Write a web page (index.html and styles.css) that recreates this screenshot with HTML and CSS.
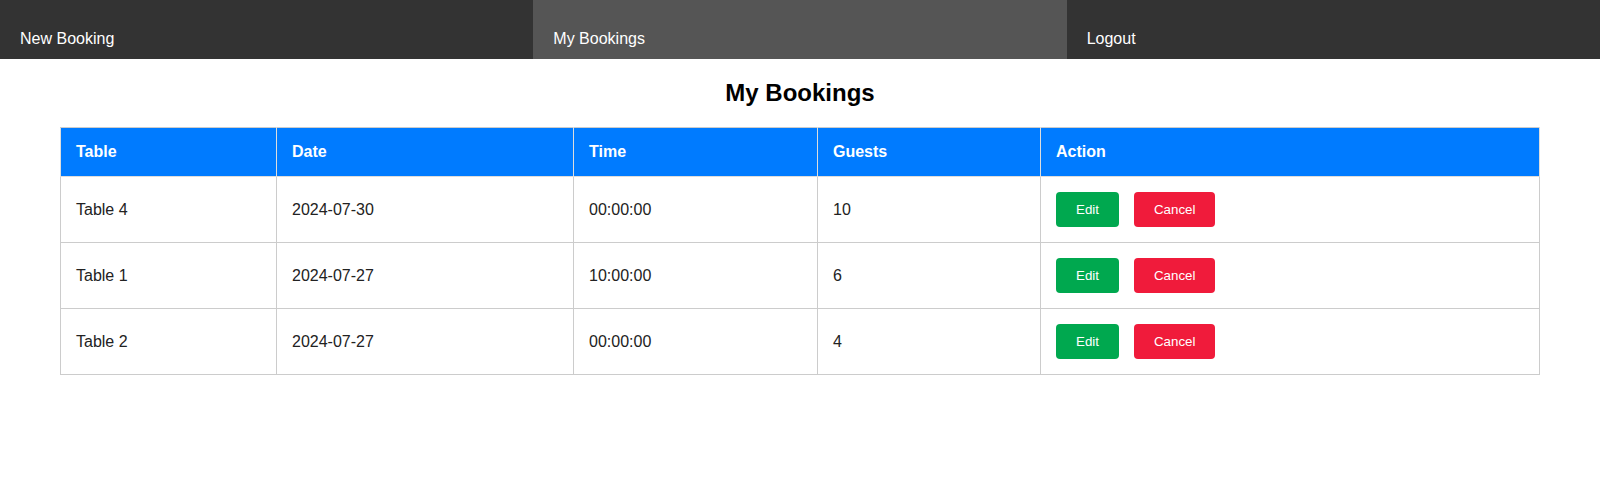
FILE: index.html
```html
<!DOCTYPE html>
<html lang="en">
<head>
<meta charset="utf-8">
<title>My Bookings</title>
<link rel="stylesheet" href="styles.css">
</head>
<body>
<nav class="nav">
  <a class="nav-item" href="#">New Booking</a>
  <a class="nav-item active" href="#">My Bookings</a>
  <a class="nav-item" href="#">Logout</a>
</nav>
<main class="content">
  <h2 class="title">My Bookings</h2>
  <table class="bookings">
    <thead>
      <tr>
        <th class="c-table">Table</th>
        <th class="c-date">Date</th>
        <th class="c-time">Time</th>
        <th class="c-guests">Guests</th>
        <th class="c-action">Action</th>
      </tr>
    </thead>
    <tbody>
      <tr>
        <td>Table 4</td><td>2024-07-30</td><td>00:00:00</td><td>10</td>
        <td><div class="actions"><button class="btn btn-edit">Edit</button><button class="btn btn-cancel">Cancel</button></div></td>
      </tr>
      <tr>
        <td>Table 1</td><td>2024-07-27</td><td>10:00:00</td><td>6</td>
        <td><div class="actions"><button class="btn btn-edit">Edit</button><button class="btn btn-cancel">Cancel</button></div></td>
      </tr>
      <tr>
        <td>Table 2</td><td>2024-07-27</td><td>00:00:00</td><td>4</td>
        <td><div class="actions"><button class="btn btn-edit">Edit</button><button class="btn btn-cancel">Cancel</button></div></td>
      </tr>
    </tbody>
  </table>
</main>
</body>
</html>
```
FILE: styles.css
```css
* { box-sizing: border-box; }
body {
  margin: 0;
  font-family: "Liberation Sans", Arial, sans-serif;
  background: #fff;
  color: #222;
}
.nav {
  display: flex;
  background: #333;
  height: 59px;
}
.nav-item {
  flex: 1;
  color: #fff;
  text-decoration: none;
  font-size: 16px;
  padding: 30px 20px 0;
}
.nav-item.active { background: #555; }
.content { padding: 0 60px; }
.title {
  text-align: center;
  font-size: 24px;
  font-weight: bold;
  margin: 20px 0 20px;
  color: #000;
}
.bookings {
  width: 100%;
  border-collapse: collapse;
  border: 1px solid #ccc;
}
.bookings th, .bookings td {
  border: 1px solid #ccc;
  padding: 15px;
  text-align: left;
  font-size: 16px;
}
.bookings th {
  background: #007bff;
  color: #fff;
  font-weight: bold;
  line-height: 18px;
  border-color: #ddd;
  border-top-color: #ccc;
}
.bookings td { color: #222; }
.c-table { width: 216px; }
.c-date { width: 297px; }
.c-time { width: 244px; }
.c-guests { width: 223px; }
.actions { display: flex; gap: 15px; }
.btn {
  font-family: "Liberation Sans", Arial, sans-serif;
  font-size: 13.33px;
  color: #fff;
  border: none;
  border-radius: 4px;
  padding: 10px 20px;
  line-height: 15px;
  cursor: pointer;
}
.btn-edit { background: #00a84f; }
.btn-cancel { background: #f01b3b; }
```
